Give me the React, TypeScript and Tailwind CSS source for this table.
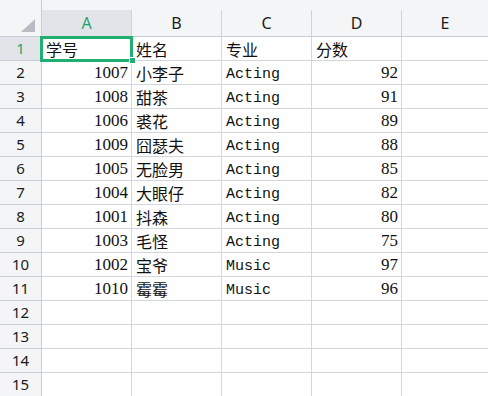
import React from "react";

const data: [string, string, string, string][] = [
  ["1007", "小李子", "Acting", "92"],
  ["1008", "甜茶", "Acting", "91"],
  ["1006", "裘花", "Acting", "89"],
  ["1009", "囧瑟夫", "Acting", "88"],
  ["1005", "无脸男", "Acting", "85"],
  ["1004", "大眼仔", "Acting", "82"],
  ["1001", "抖森", "Acting", "80"],
  ["1003", "毛怪", "Acting", "75"],
  ["1002", "宝爷", "Music", "97"],
  ["1010", "霉霉", "Music", "96"],
];

const cjk = { fontFamily: '"Noto Sans CJK SC", sans-serif' };
const mono = { fontFamily: '"Liberation Mono", "Noto Sans CJK SC", monospace' };
const serif = { fontFamily: '"Liberation Serif", serif' };
const head = { fontFamily: '"Noto Sans", "Open Sans", sans-serif' };

function RowHead({ n, active }: { n: number; active?: boolean }) {
  return (
    <div
      className={
        "w-[42px] shrink-0 h-full flex items-center justify-center border-r border-b border-[#c8ccd5] text-[15px] " +
        (active ? "bg-[#e2e4e9] text-[#1fa36f]" : "bg-[#f4f5f7] text-[#1b1b1b]")
      }
      style={head}
    >
      {n}
    </div>
  );
}

function Cell({ children, right, font, extra }: { children?: React.ReactNode; right?: boolean; font?: React.CSSProperties; extra?: string }) {
  return (
    <div
      className={
        "w-[90px] shrink-0 h-full flex items-center border-r border-b border-[#d3d6de] text-[#111] whitespace-nowrap overflow-hidden " +
        (right ? "justify-end pr-[3px] " : "pl-[4px] ") +
        (extra || "")
      }
      style={font}
    >
      {children}
    </div>
  );
}

export default function App() {
  const rows: React.ReactNode[] = [];
  rows.push(
    <div key="r1" className="flex h-[24px]">
      <RowHead n={1} active />
      <Cell font={{ ...cjk, fontSize: 16 }}>学号</Cell>
      <Cell font={{ ...cjk, fontSize: 16 }}>姓名</Cell>
      <Cell font={{ ...cjk, fontSize: 16 }}>专业</Cell>
      <Cell font={{ ...cjk, fontSize: 16 }}>分数</Cell>
      <div className="flex-1 h-full border-b border-[#d3d6de]" />
    </div>
  );
  data.forEach((d, i) => {
    rows.push(
      <div key={"r" + (i + 2)} className="flex h-[24px]">
        <RowHead n={i + 2} />
        <Cell right font={{ ...serif, fontSize: 17 }} extra="pt-[1px]">{d[0]}</Cell>
        <Cell font={{ ...cjk, fontSize: 16 }}>{d[1]}</Cell>
        <Cell font={{ ...mono, fontSize: 15 }} extra="pt-[5px]">
          {d[2]}
        </Cell>
        <Cell right font={{ ...serif, fontSize: 17 }} extra="pt-[1px]">{d[3]}</Cell>
        <div className="flex-1 h-full border-b border-[#d3d6de]" />
      </div>
    );
  });
  for (let n = 12; n <= 15; n++) {
    rows.push(
      <div key={"r" + n} className="flex h-[24px]">
        <RowHead n={n} />
        <Cell />
        <Cell />
        <Cell />
        <Cell />
        <div className="flex-1 h-full border-b border-[#d3d6de]" />
      </div>
    );
  }

  const cols = ["A", "B", "C", "D", "E"];

  return (
    <div className="relative w-[488px] h-[396px] overflow-hidden bg-white">
      <div className="flex flex-col">
        <div className="flex h-[37px] bg-[#f4f5f7] border-b border-[#c8ccd5]">
          <div className="w-[42px] shrink-0 border-r border-[#c8ccd5] relative">
            <svg className="absolute left-[21px] top-[19px]" width="14" height="13" viewBox="0 0 14 13">
              <polygon points="0,13 14,0 14,13" fill="#b9bcc3" />
            </svg>
          </div>
          {cols.map((c, i) => (
            <div key={c} className={"flex flex-col " + (i < 4 ? "w-[90px] shrink-0" : "flex-1")}>
              <div className="h-[10px]" />
              <div
                className={
                  "flex-1 flex items-center justify-center text-[16px] " +
                  (i < 4 ? "border-r border-[#d0d3db] " : "") +
                  (i === 0 ? "bg-[#e2e4e9] text-[#1fa36f]" : "text-[#1b1b1b]")
                }
                style={head}
              >
                {c}
              </div>
            </div>
          ))}
        </div>
        {rows}
      </div>
      <div className="absolute left-[40px] top-[36px] w-[93px] h-[26px] border-[3px] border-[#1fb071]" />
      <div className="absolute left-[129px] top-[57px] w-[7px] h-[7px] bg-[#1fb071] border border-white" />
    </div>
  );
}
